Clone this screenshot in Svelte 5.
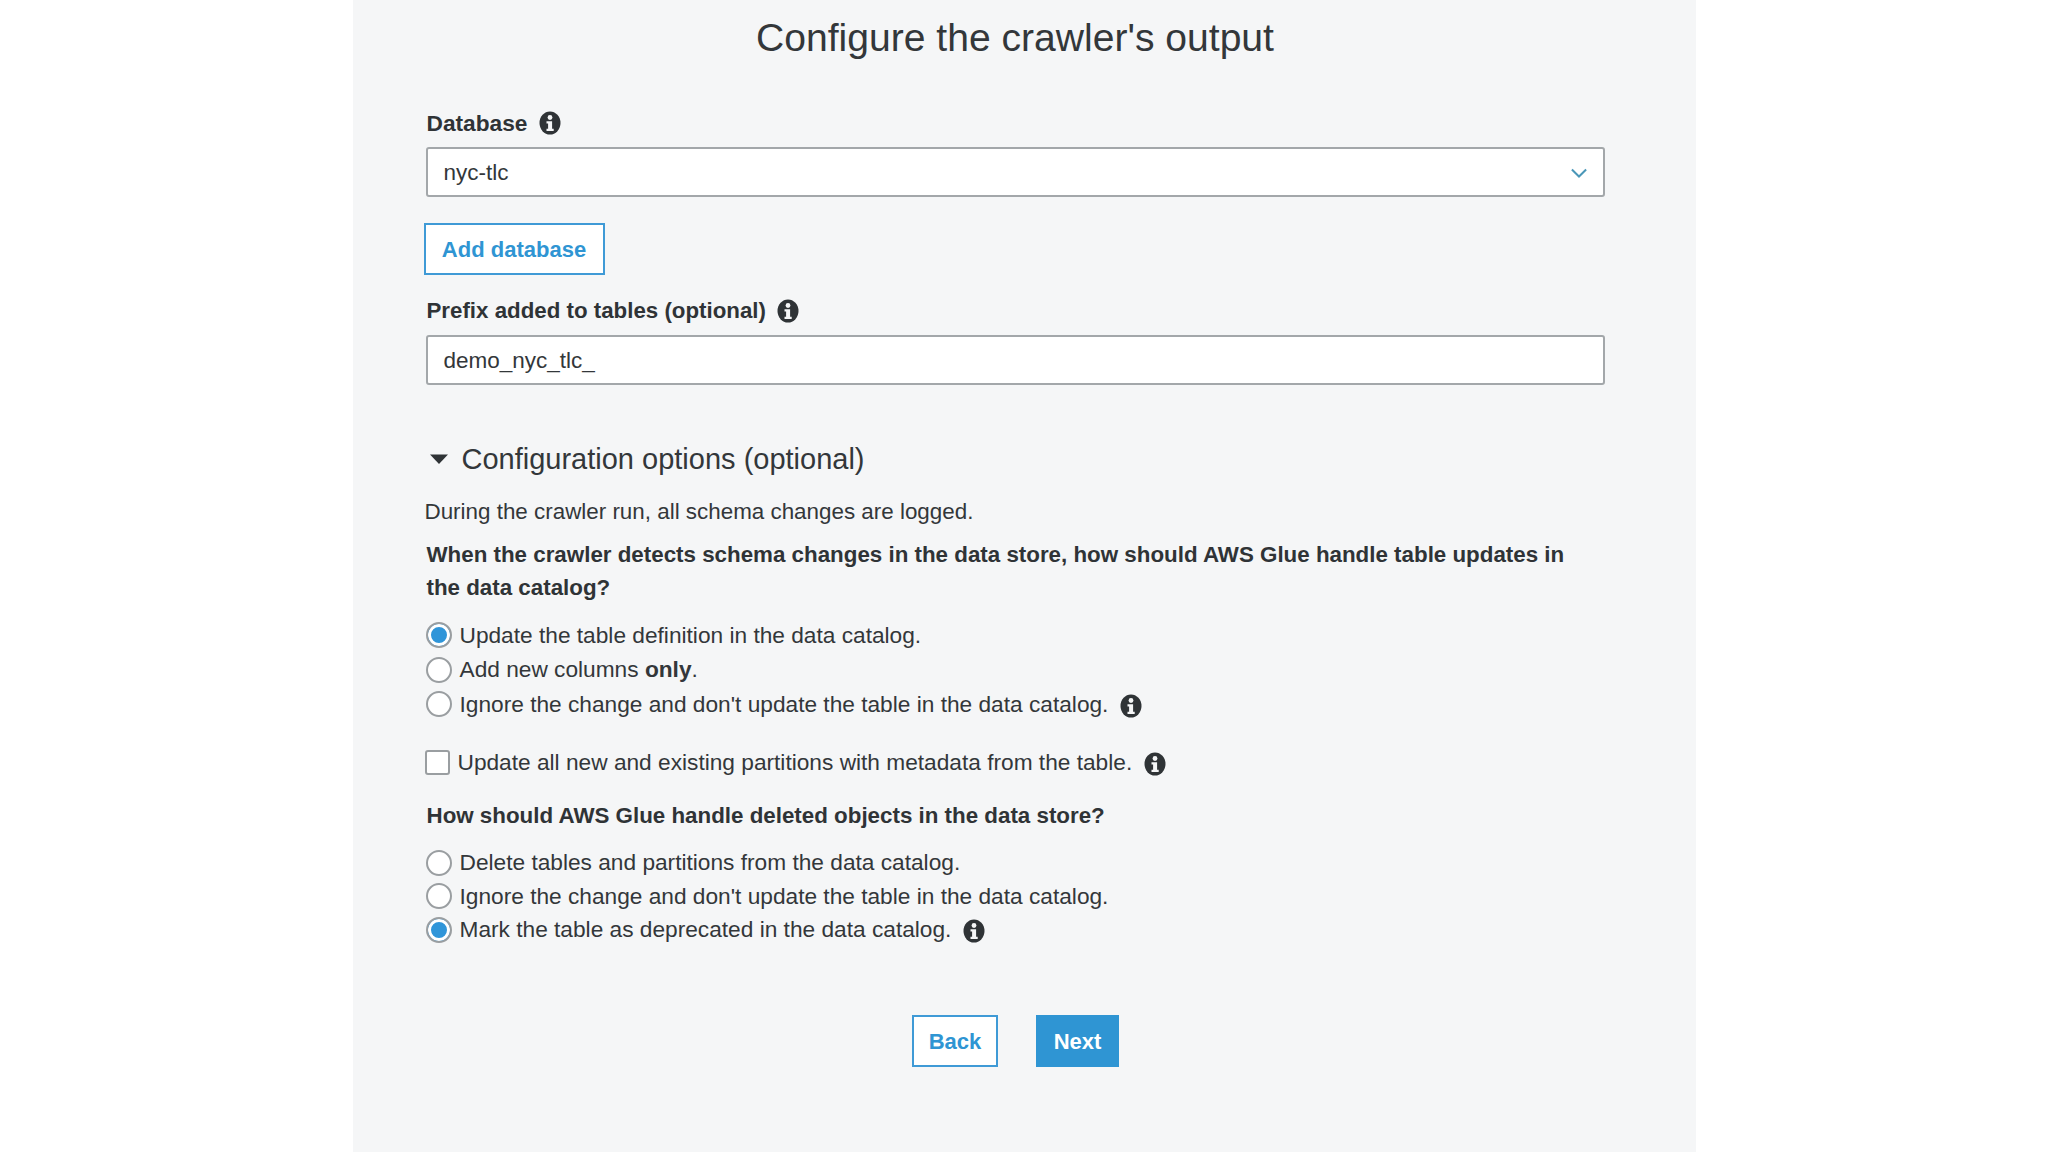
<script>
</script>

{#snippet info()}
  <svg class="info" viewBox="0 0 22 24" aria-hidden="true">
    <ellipse cx="11" cy="12" rx="10.5" ry="11.5" fill="#2f3336" />
    <circle cx="11" cy="6.5" r="2.4" fill="#f5f6f7" />
    <path d="M7.5 10.2h5.6v7.6h1.6v2.2H7.5v-2.2h1.6v-5.4H7.5z" fill="#f5f6f7" />
  </svg>
{/snippet}

<div class="page">
  <main class="panel">
    <h1>Configure the crawler's output</h1>

    <div class="label first">Database {@render info()}</div>
    <div class="field">
      <span>nyc-tlc</span>
      <svg class="chev" viewBox="0 0 18 11" aria-hidden="true">
        <path d="M1 1.5l8 8 8-8" fill="none" stroke="#4a97b8" stroke-width="2.2" />
      </svg>
    </div>

    <button class="btn add">Add database</button>

    <div class="label second">Prefix added to tables (optional) {@render info()}</div>
    <div class="field"><span>demo_nyc_tlc_</span></div>

    <div class="config">
      <svg class="tri" viewBox="0 0 18 10" aria-hidden="true"><path d="M0 .5h18L9 10z" fill="#2f3336" /></svg>
      <span>Configuration options (optional)</span>
    </div>

    <p class="note">During the crawler run, all schema changes are logged.</p>
    <p class="question wrap">When the crawler detects schema changes in the data store, how should AWS Glue handle table updates in the data catalog?</p>

    <div class="options">
      <div class="row"><span class="radio on"></span>Update the table definition in the data catalog.</div>
      <div class="row"><span class="radio"></span><span>Add new columns <b>only</b>.</span></div>
      <div class="row"><span class="radio"></span>Ignore the change and don't update the table in the data catalog. {@render info()}</div>
    </div>

    <div class="row check"><span class="box"></span>Update all new and existing partitions with metadata from the table. {@render info()}</div>

    <p class="question q2">How should AWS Glue handle deleted objects in the data store?</p>

    <div class="options tight">
      <div class="row"><span class="radio"></span>Delete tables and partitions from the data catalog.</div>
      <div class="row"><span class="radio"></span>Ignore the change and don't update the table in the data catalog.</div>
      <div class="row"><span class="radio on"></span>Mark the table as deprecated in the data catalog. {@render info()}</div>
    </div>

    <div class="actions">
      <button class="btn back">Back</button>
      <button class="btn next">Next</button>
    </div>
  </main>
</div>

<style>
  :global(body) {
    margin: 0;
    background: #fff;
    font-family: "Liberation Sans", Arial, sans-serif;
    color: #33373a;
  }
  .page {
    display: flex;
    justify-content: center;
    height: 1152px;
    overflow: hidden;
  }
  .panel {
    box-sizing: border-box;
    width: 1343px;
    height: 1152px;
    padding: 0 91px 0 73px;
    background: #f5f6f7;
    font-size: 22px;
  }
  h1 {
    margin: 0;
    height: 76px;
    line-height: 76px;
    font-size: 39.1px;
    font-weight: 400;
    text-align: center;
  }
  .label {
    display: flex;
    align-items: center;
    gap: 11px;
    height: 30px;
    padding-left: 1px;
    font-size: 22.3px;
    font-weight: 700;
    color: #2f3336;
  }
  .first { margin-top: 32px; font-size: 22.7px; gap: 12px; }
  .second { margin-top: 21px; }
  .field {
    box-sizing: border-box;
    display: flex;
    align-items: center;
    justify-content: space-between;
    height: 50px;
    margin-top: 9px;
    padding: 1px 16px 0 16px;
    background: #fff;
    border: 2px solid #a3a7aa;
    border-radius: 3px;
    font-size: 22.5px;
  }
  .chev { width: 16px; height: 10px; }
  .info { width: 22px; height: 24px; flex: none; }
  .btn {
    box-sizing: border-box;
    height: 52px;
    font: 700 22px "Liberation Sans", Arial, sans-serif;
    padding: 2px 0 0;
    border: 2px solid #3f9ad6;
    background: #fff;
    color: #2f95d3;
  }
  .add {
    display: block;
    width: 181px;
    margin: 26px 0 0 -2px;
  }
  .config {
    display: flex;
    align-items: center;
    gap: 14px;
    height: 40px;
    margin-top: 54px;
    padding-left: 4px;
    font-size: 29px;
  }
  .tri { width: 18px; height: 10px; }
  .note {
    margin: 17px 0 0 -1px;
    line-height: 32px;
    font-size: 22.4px;
  }
  .question {
    margin: 10px 0 0;
    padding-left: 1px;
    line-height: 33px;
    font-size: 22.35px;
    font-weight: 700;
    color: #2f3336;
  }
  .wrap { padding-right: 30px; }
  .q2 { margin-top: 19px; }
  .options { margin-top: 14px; }
  .options.tight { margin-top: 14.5px; }
  .row {
    display: flex;
    align-items: center;
    gap: 8px;
    height: 34.5px;
    font-size: 22.7px;
    white-space: pre-wrap;
  }
  .row .info {
    margin: 3px 0 0 -3px;
  }
  .tight .row { height: 33.5px; }
  .radio {
    box-sizing: border-box;
    width: 26px;
    height: 26px;
    flex: none;
    background: #fff;
    border: 2px solid #9a9ea1;
    border-radius: 50%;
  }
  .radio.on {
    background: #2f95d9;
    box-shadow: inset 0 0 0 3px #fff;
  }
  .check {
    height: 34px;
    margin-top: 24px;
    margin-left: -1px;
  }
  .box {
    box-sizing: border-box;
    width: 25px;
    height: 25px;
    flex: none;
    background: #fff;
    border: 2px solid #9a9ea1;
    border-radius: 3px;
  }
  .actions {
    display: flex;
    justify-content: center;
    gap: 38px;
    margin-top: 68px;
    padding-left: 1px;
  }
  .back { width: 86px; }
  .next {
    width: 83px;
    background: #2f95d3;
    border-color: #2f95d3;
    color: #fff;
  }
</style>
